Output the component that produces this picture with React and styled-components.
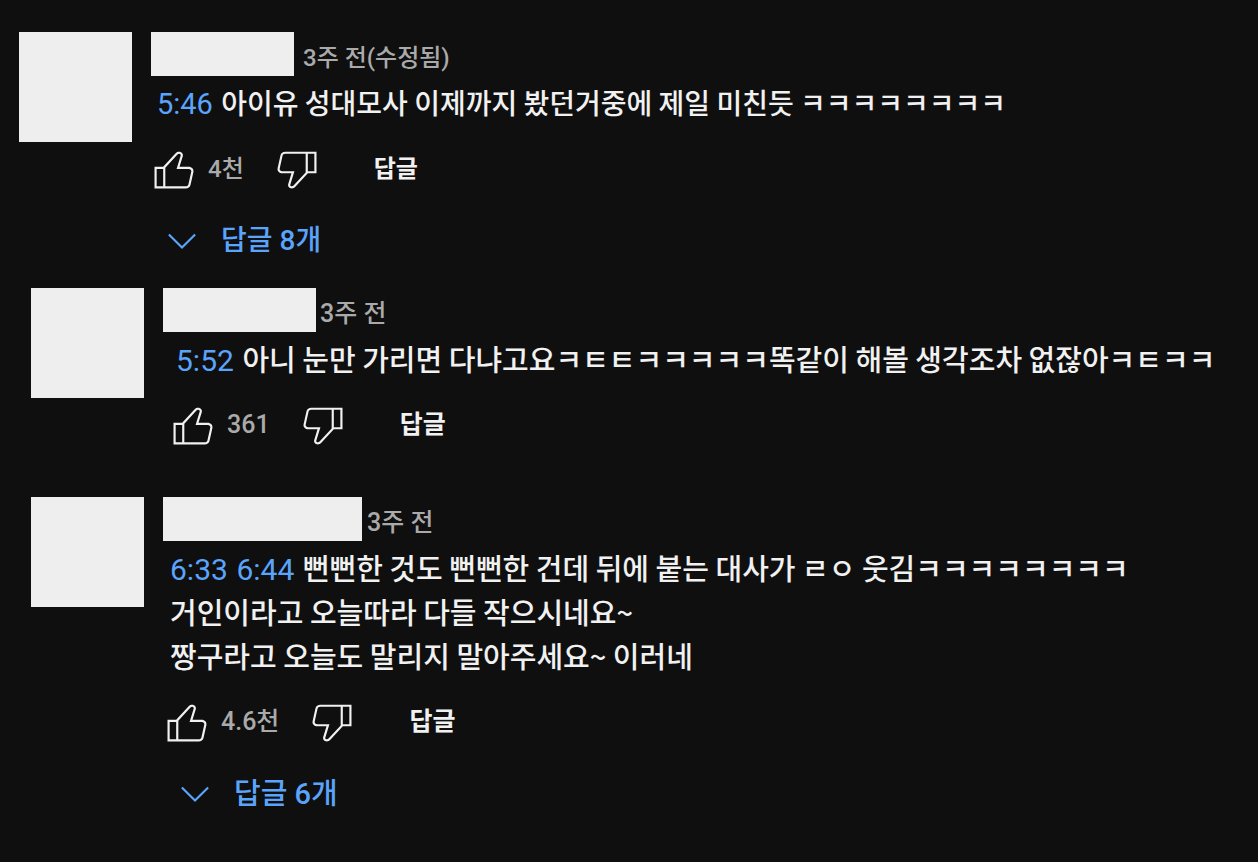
import React from "react";
import styled, { createGlobalStyle } from "styled-components";

const comments = [
  {
    id: 1,
    offset: 0,
    indent: 0,
    nameWidth: 143,
    nameGap: 9,
    textSize: 28,
    smallSize: 24,
    time: "3주 전(수정됨)",
    stamps: ["5:46"],
    lines: ["아이유 성대모사 이제까지 봤던거중에 제일 미친듯 ㅋㅋㅋㅋㅋㅋㅋㅋ"],
    likes: "4천",
    replies: 8,
    space: 21,
  },
  {
    id: 2,
    offset: 12,
    indent: 7,
    nameWidth: 153,
    nameGap: 4,
    textSize: 29,
    smallSize: 25,
    time: "3주 전",
    stamps: ["5:52"],
    lines: [
      "아니 눈만 가리면 다냐고요ㅋㅌㅌㅋㅋㅋㅋㅋ똑같이 해볼 생각조차 없잖아ㅋㅌㅋㅋ",
    ],
    likes: "361",
    replies: 0,
    space: 46,
  },
  {
    id: 3,
    offset: 12,
    indent: 1,
    nameWidth: 199,
    nameGap: 5,
    textSize: 29,
    smallSize: 25,
    time: "3주 전",
    stamps: ["6:33", "6:44"],
    lines: [
      "뻔뻔한 것도 뻔뻔한 건데 뒤에 붙는 대사가 ㄹㅇ 웃김ㅋㅋㅋㅋㅋㅋㅋㅋ",
      "거인이라고 오늘따라 다들 작으시네요~",
      "짱구라고 오늘도 말리지 말아주세요~ 이러네",
    ],
    likes: "4.6천",
    replies: 6,
    space: 0,
  },
];

const LikeIcon = () => (
  <Icon viewBox="0 0 24 24" aria-hidden="true">
    <path d="M18.77,11h-4.23l1.52-4.94C16.38,5.03,15.54,4,14.38,4c-0.58,0-1.14,0.24-1.52,0.65L7,11H3v10h4h1h9.43c1.06,0,1.98-0.67,2.19-1.61l1.34-6C21.23,12.15,20.18,11,18.77,11z M7,20H4v-8h3V20z M19.98,13.17l-1.34,6C18.54,19.65,18.03,20,17.43,20H8v-8.61l5.6-6.06C13.79,5.12,14.08,5,14.38,5c0.26,0,0.5,0.11,0.63,0.3c0.07,0.1,0.15,0.26,0.09,0.47l-1.52,4.94L13.18,12h1.35h4.23c0.41,0,0.8,0.17,1.03,0.46C19.92,12.61,20.05,12.86,19.98,13.17z" />
  </Icon>
);

const DislikeIcon = () => (
  <Icon viewBox="0 0 24 24" aria-hidden="true">
    <path d="M17,4h-1H6.57C5.5,4,4.59,4.67,4.38,5.61l-1.34,6C2.77,12.85,3.82,14,5.23,14h4.23l-1.52,4.94C7.62,19.97,8.46,21,9.62,21c0.58,0,1.14-0.24,1.52-0.65L17,14h4V4H17z M10.4,19.67C10.21,19.88,9.92,20,9.62,20c-0.26,0-0.5-0.11-0.63-0.3c-0.07-0.1-0.15-0.26-0.09-0.47l1.52-4.94l0.4-1.29H9.46H5.23c-0.41,0-0.8-0.17-1.03-0.46c-0.12-0.15-0.25-0.4-0.18-0.72l1.34-6C5.46,5.35,5.97,5,6.57,5H16v8.61L10.4,19.67z M20,13h-3V5h3V13z" />
  </Icon>
);

const ChevronIcon = () => (
  <Icon viewBox="0 0 24 24" aria-hidden="true">
    <path d="M12,15.7L5.6,9.4l0.7-0.7l5.7,5.6l5.7-5.6l0.7,0.7L12,15.7z" />
  </Icon>
);

const Comment = ({ comment }) => {
  return (
    <Item $offset={comment.offset} $space={comment.space}>
      <Avatar />
      <Content>
        <Header $gap={comment.nameGap}>
          <Name $width={comment.nameWidth} />
          <Time $size={comment.smallSize}>{comment.time}</Time>
        </Header>

        <Body $indent={comment.indent} $size={comment.textSize}>
          {comment.lines.map((line, i) => (
            <Line key={line}>
              {i === 0 &&
                comment.stamps.map(stamp => (
                  <React.Fragment key={stamp}>
                    <Stamp href="#" $size={comment.textSize + 1}>{stamp}</Stamp>{" "}
                  </React.Fragment>
                ))}
              {line}
            </Line>
          ))}
        </Body>

        <Toolbar $indent={comment.indent}>
          <IconButton aria-label="좋아요"><LikeIcon /></IconButton>
          <Count $size={comment.smallSize}>{comment.likes}</Count>
          <IconButton aria-label="싫어요"><DislikeIcon /></IconButton>
          <ReplyButton $size={comment.smallSize}>답글</ReplyButton>
        </Toolbar>

        {comment.replies > 0 && (
          <MoreReplies $indent={comment.indent} $size={comment.textSize}>
            <ChevronIcon />
            <span>답글 {comment.replies}개</span>
          </MoreReplies>
        )}
      </Content>
    </Item>
  );
};

const App = () => {
  return (
    <>
      <GlobalStyle />
      <List>
        {comments.map(comment => (
          <Comment key={comment.id} comment={comment} />
        ))}
      </List>
    </>
  );
};

export default App;


const GlobalStyle = createGlobalStyle`
  * {
    box-sizing: border-box;
  }

  body {
    margin: 0;
    background: #0f0f0f;
    color: #f1f1f1;
    font-family: Roboto, "Noto Sans CJK KR", sans-serif;
  }

  button {
    padding: 0;
    border: 0;
    background: none;
    color: inherit;
    font-family: inherit;
    cursor: pointer;
  }
`;

const List = styled.main`
  padding: 32px 19px;
`;

const Item = styled.article`
  display: flex;
  align-items: flex-start;
  gap: 16px;
  margin-left: ${props => props.$offset}px;
  margin-bottom: ${props => props.$space}px;
`;

const Avatar = styled.div`
  flex: none;
  width: 113px;
  height: 110px;
  background: #eeeeee;
`;

const Content = styled.div`
  flex: 1;
  min-width: 0;
`;

const Header = styled.header`
  display: flex;
  gap: ${props => props.$gap}px;
  padding-left: 3px;
`;

const Name = styled.div`
  width: ${props => props.$width}px;
  height: 44px;
  background: #eeeeee;
`;

const Time = styled.span`
  padding-top: 8px;
  color: #aaaaaa;
  font-size: ${props => props.$size}px;
  font-weight: 500;
  line-height: 36px;
`;

const Body = styled.div`
  margin-top: 4px;
  padding-left: ${props => props.$indent + 9}px;
  font-family: "Noto Sans CJK KR", sans-serif;
  font-size: ${props => props.$size}px;
  font-weight: 500;
  line-height: 44px;
`;

const Line = styled.p`
  margin: 0;
`;

const Stamp = styled.a`
  margin-right: 2px;
  color: #5ba4fc;
  font-family: Roboto, sans-serif;
  font-size: ${props => props.$size}px;
  font-weight: 400;
  line-height: 36px;
  text-decoration: none;
`;

const Toolbar = styled.div`
  display: flex;
  align-items: center;
  margin-top: 19px;
  padding-left: ${props => props.$indent}px;
`;

const Icon = styled.svg`
  display: block;
  width: 52px;
  height: 52px;
  fill: currentColor;
`;

const IconButton = styled.button`
  flex: none;
`;

const Count = styled.span`
  margin: 0 27px 0 8px;
  color: #aaaaaa;
  font-size: ${props => props.$size}px;
  font-weight: 500;
  line-height: 44px;
`;

const ReplyButton = styled.button`
  margin-left: 51px;
  font-size: ${props => props.$size}px;
  font-weight: 700;
  line-height: 44px;
`;

const MoreReplies = styled.button`
  display: flex;
  align-items: center;
  gap: 13px;
  margin-top: 20px;
  margin-left: ${props => props.$indent + 8}px;
  color: #5ba4fc;
  font-size: ${props => props.$size}px;
  font-weight: 500;
  line-height: 44px;
`;
